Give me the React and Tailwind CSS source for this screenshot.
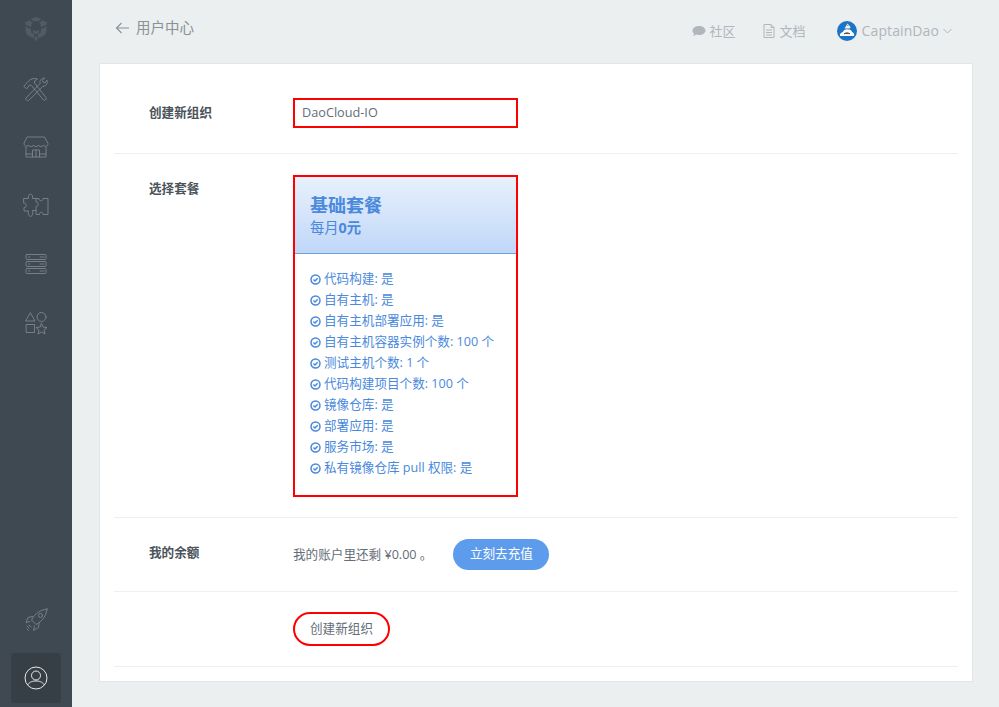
import React from 'react';

const F = { fontFamily: '"Open Sans","Noto Sans CJK SC",sans-serif' };

const S = ({ children }) => (
  <svg width="26" height="26" viewBox="0 0 26 26" fill="none" stroke="#7d858c" strokeWidth="0.9" strokeLinejoin="round" strokeLinecap="round">{children}</svg>
);

const Logo = () => (
  <svg width="24" height="26" viewBox="0 0 26 28" fill="#525b64">
    <path d="M13 1 L19 3.5 L15 6 L13 5.2 L11 6 L7 3.5 Z" />
    <path d="M5.5 4.5 L9.5 7 L8 9 L8 12 L1.5 9 L1 7 Z" />
    <path d="M20.5 4.5 L16.5 7 L18 9 L18 12 L24.5 9 L25 7 Z" />
    <path d="M1.5 11 L7.5 14 L8 18 L11 20 L11 24 L4 21 L2 18 Z" />
    <path d="M24.5 11 L18.5 14 L18 18 L15 20 L15 24 L22 21 L24 18 Z" />
    <path d="M9.5 14.5 L13 16.5 L16.5 14.5 L16 18 L13 20 L10 18 Z" />
    <path d="M11.5 22 L14.5 22 L14.5 26 L13 27 L11.5 26 Z" />
  </svg>
);
const Tools = () => (
  <S>
    <g transform="translate(-1 0)">
      <path d="M2 10 L7 4.5 C9.5 2.5 13 2 15.5 3 L12.5 5 L12.5 7 L24 21.5 C25 23.5 23 25 21.5 24 L9.5 9.5 L7.5 9 L5 12.5 Z" />
      <path d="M25 4.5 C26 7.5 24 10.5 21 10.2 L7 24.2 C5.5 25.5 3 23.5 4 22 L18 7.5 C17.5 4.5 19.5 2 22.5 2 L20.5 4.5 L21.5 6.5 L23 6.5 Z" />
    </g>
  </S>
);
const Store = () => (
  <S>
    <g transform="translate(0 1.5)">
      <path d="M4.5 1.5 H21.5 L25 8 C25 11.5 21 11.5 20.5 9.5 C20 11.5 16 11.5 15.5 9.5 C15 11.5 11 11.5 10.5 9.5 C10 11.5 6 11.5 5.5 9.5 C5 11.5 1 11.5 1 8 Z" />
      <path d="M3 11.5 V21.5 H23 V11.5 M3 18.5 H9.5 M16.5 18.5 H23" />
      <path d="M9.5 21.5 V14.5 H16.5 V21.5 M13 14.5 V21.5" />
    </g>
  </S>
);
const Puzzle = () => (
  <S>
    <path d="M1 5.5 H5.5 C5 3.5 5.5 1.5 7.5 1 C9.5 1.5 10 3.5 9.5 5.5 H13 V9 C16 8.5 16 13.5 13 13.5 V17.5 H9.5 C10 20 10 23 7.5 23.5 C5 23 5 20 5.5 18 H1 V14.5 C4 15 4 9.5 1 10 Z" />
    <path d="M13 5.5 H16 C15.5 8.5 20.5 8.5 20 5.5 H25 V21.5 H20 C20.5 18.5 16 18.5 16.5 21.5 H13 V17.5" />
  </S>
);
const Servers = () => (
  <S>
    <g transform="translate(0.5 0.5)">
      <rect x="2.5" y="3" width="20" height="5" rx="1" />
      <rect x="2.5" y="10" width="20" height="5" rx="1" />
      <rect x="2.5" y="17" width="20" height="5" rx="1" />
      <path d="M5 5.5 h1.5 M5 12.5 h1.5 M5 19.5 h1.5 M16.5 5.5 h4 M16.5 12.5 h4 M16.5 19.5 h4" />
    </g>
  </S>
);
const Shapes = () => (
  <S>
    <path d="M7.5 3 L12 11 H3 Z" />
    <circle cx="18.5" cy="7" r="4.5" />
    <rect x="3.5" y="14.5" width="8" height="8" />
    <path d="M18.5 13.5 L20 17 L24 17.5 L21 20 L22 24 L18.5 22 L15 24 L16 20 L13 17.5 L17 17 Z" />
  </S>
);
const Rocket = () => (
  <S>
    <path d="M24 2 C18 3 12 6 8.5 13 L13 17.5 C20 14 23.5 8 24 2 Z" />
    <circle cx="17.5" cy="8.5" r="2" />
    <path d="M9.5 9.5 L5 10.5 L3 15.5 L7 14.5 M16 16 L15.5 20.5 L10.5 23.5 L11.5 19" />
    <path d="M4 19 L6 21 M6 18 L8 20 M4 22 L5.5 23.5" />
  </S>
);
const User = () => (
  <svg width="24" height="24" viewBox="0 0 24 24" fill="none" stroke="#e6e8ea" strokeWidth="1">
    <circle cx="12" cy="12" r="11" />
    <circle cx="12" cy="9.5" r="4.5" />
    <path d="M3.5 19 C6 15.5 9 15 12 15 C15 15 18 15.5 20.5 19" />
  </svg>
);
const Check = () => (
  <svg width="11" height="11" viewBox="0 0 11 11" fill="none" stroke="#4a89dc" strokeWidth="1.5" className="mr-[3px] shrink-0">
    <circle cx="5.5" cy="5.5" r="4.5" />
    <path d="M3.4 5.5 L5 7 L7.7 4.2" />
  </svg>
);
const Avatar = () => (
  <svg width="20" height="20" viewBox="0 0 20 20">
    <circle cx="10" cy="10" r="10" fill="#1c74c9" />
    <path d="M7.5 7.5 L10.5 2.5 L13.5 6 L13 7.5 Z" fill="#eef0f2" />
    <path d="M9.5 5 L11 3.5 L11.5 5 Z" fill="#d98a3a" />
    <path d="M3 15 C2.5 12.5 4.5 11.5 6 11 C6.5 9 9 8 11 8.5 C13 8 15 9.5 15 11 C16.5 11.5 17.5 13 17 15 Z" fill="#fff" />
    <path d="M7 12.8 C8.5 11.4 11.5 11.4 13 12.8 C11.5 12.5 8.5 12.5 7 12.8 Z" fill="#333" stroke="#333" strokeWidth="0.6" />
  </svg>
);

const features = [
  '代码构建: 是', '自有主机: 是', '自有主机部署应用: 是', '自有主机容器实例个数: 100 个', '测试主机个数: 1 个',
  '代码构建项目个数: 100 个', '镜像仓库: 是', '部署应用: 是', '服务市场: 是', '私有镜像仓库 pull 权限: 是',
];

const Row = ({ label, className, children }) => (
  <div className={`flex border-b border-[#edf0f1] ${className}`}>
    <div className="w-[179px] shrink-0 pl-[35px] text-[12.6px] font-bold leading-[18px] text-[#4a525a]">{label}</div>
    <div>{children}</div>
  </div>
);

export default function App() {
  return (
    <div style={F} className="flex h-[707px] w-[999px] overflow-hidden bg-[#ebeff0]">
      <aside className="flex w-[72px] shrink-0 flex-col items-center bg-[#3f4952]">
        <div className="mt-[16px] flex h-[26px] items-center"><Logo /></div>
        <div className="mt-[33.5px] flex flex-col items-center gap-[32.5px]">
          <Tools /><Store /><Puzzle /><Servers /><Shapes />
        </div>
        <div className="mt-auto mb-[20px] flex flex-col items-center">
          <Rocket />
        </div>
        <div className="mb-1 flex h-[50px] w-[50px] items-center justify-center rounded-sm bg-[#363e46]">
          <User />
        </div>
      </aside>
      <main className="flex-1">
        <header className="flex h-[63px] items-start justify-between pl-[43px] pr-[48px]">
          <div className="mt-[19px] flex items-center text-[14.5px] leading-[18px] text-[#8a9096]">
            <svg width="15" height="12" viewBox="0 0 15 12" fill="none" stroke="#8a9096" strokeWidth="1.1" className="mr-[6px]">
              <path d="M14 6 H1.5 M6.5 1 L1.5 6 L6.5 11" />
            </svg>
            用户中心
          </div>
          <div className="mt-[21px] flex items-center text-[13px] leading-5 text-[#b0b6bc]">
            <svg width="14" height="12" viewBox="0 0 14 12" fill="#b0b6bc" className="mr-[4px]">
              <path d="M7 1 C10.5 1 13.5 3 13.5 5.5 C13.5 8 10.5 10 7 10 C6 10 5 9.9 4.2 9.6 C3.2 10.5 2 11 1 11 C1.7 10.2 2 9.4 2.1 8.6 C1 7.8.5 6.7.5 5.5 C.5 3 3.5 1 7 1 Z" />
            </svg>
            <span>社区</span>
            <svg width="12" height="14" viewBox="0 0 12 14" fill="none" stroke="#b0b6bc" className="ml-[27px] mr-[5px]">
              <path d="M1 .5 H8 L11 3.5 V13.5 H1 Z M8 .5 V3.5 H11 M3 6 H9 M3 8.5 H9 M3 11 H9" />
            </svg>
            <span>文档</span>
            <span className="ml-[31px] mr-[5px]"><Avatar /></span>
            <span className="text-sm tracking-[0.1px]">CaptainDao</span>
            <svg width="9" height="6" viewBox="0 0 9 6" fill="none" stroke="#b0b6bc" className="ml-[4px]">
              <path d="M.5 1 L4.5 5 L8.5 1" />
            </svg>
          </div>
        </header>
        <section className="mx-[27px] h-[619px] w-[874px] border border-[#e2e6e8] bg-white px-[14px]">
          <Row label="创建新组织" className="h-[90px] items-start pt-[40px]">
            <div className="-mt-[6px] flex h-[30px] w-[225px] items-center border-2 border-[#ff0000] pl-[7px] text-[12.7px] text-[#656d78]">DaoCloud-IO</div>
          </Row>
          <Row label="选择套餐" className="h-[364px] items-start pt-[26px]">
            <div className="-mt-[5px] w-[225px] border-2 border-[#ff0000]">
              <div className="h-[77px] border-b border-[#6f9fdf] bg-gradient-to-b from-[#e8f1fd] to-[#c0d7f7] pl-[15px] pt-[15px] text-[#4a89dc]">
                <div className="text-[18px] font-bold leading-[26px]">基础套餐</div>
                <div className="text-[14.3px] leading-[20px]">每月<b>0元</b></div>
              </div>
              <ul className="pl-[15px] pt-[15px] pb-[16px] text-[12.6px] text-[#4a89dc]">
                {features.map((f) => (
                  <li key={f} className="flex h-[21px] items-center"><Check />{f}</li>
                ))}
              </ul>
            </div>
          </Row>
          <Row label="我的余额" className="h-[74px] items-start pt-[26px]">
            <div className="-mt-[5px] flex items-center text-[12.6px] text-[#656d78]">
              <span className="pt-[1px]">我的账户里还剩 ¥0.00 。</span>
              <span className="ml-[21px] flex h-[31px] w-[96px] items-center justify-center rounded-full bg-[#5d9cec] text-white">立刻去充值</span>
            </div>
          </Row>
          <Row label="" className="h-[75px] items-center">
            <div className="flex h-[34px] w-[97px] items-center justify-center rounded-full border-2 border-[#ff0000] text-[12.6px] text-[#656d78]">创建新组织</div>
          </Row>
        </section>
      </main>
    </div>
  );
}
